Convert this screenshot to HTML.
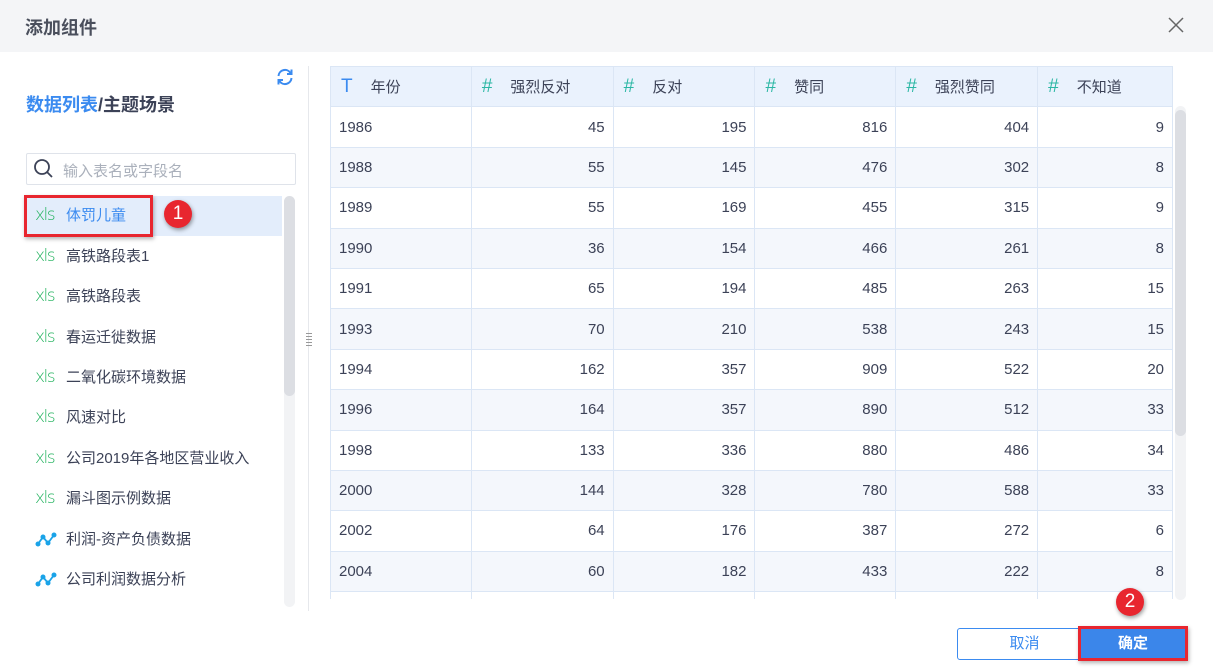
<!DOCTYPE html><html><head><meta charset="utf-8"><style>
*{margin:0;padding:0;box-sizing:border-box}
body{width:1213px;height:671px;background:#fff;font-family:"Liberation Sans","Noto Sans CJK SC",sans-serif;position:relative;overflow:hidden;color:#3c4257}
.a{position:absolute}
.hdr{left:0;top:0;width:1213px;height:52px;background:#f4f5f7}
.li{position:absolute;left:25px;width:257px;height:40px;font-size:15px;line-height:40px;color:#3c4257}
.xls{position:absolute;left:10px;top:-1px;color:#24b35f;font-size:17px;letter-spacing:-1.5px;font-family:"DejaVu Sans",sans-serif;font-weight:200}
.li span.t{position:absolute;left:41px}
table{border-collapse:collapse;position:absolute;left:330px;top:66px;font-size:15px}
td,th{border:1px solid #dbe6f5;height:40.4px;padding:0 8px;font-weight:normal}
th{background:#eaf2fd;text-align:left;color:#3c4257}
td{text-align:right}
td:first-child{text-align:left}
tr:nth-child(odd) td{background:#f4f7fc}
.h{color:#2bb7a4;font-size:19px;margin:0 18px 0 2px}
.badge{position:absolute;width:28px;height:28px;border-radius:50%;background:#e8262f;color:#fff;font-size:19px;text-align:center;line-height:28px;box-shadow:1px 2px 4px rgba(0,0,0,.4)}
</style></head><body>
<div class="a hdr"></div>
<div class="a" style="left:25px;top:14px;font-size:18px;font-weight:bold;color:#4a4f5c">添加组件</div>
<svg class="a" style="left:1167px;top:16px" width="18" height="18"><path d="M2 2L16 16M16 2L2 16" stroke="#666" stroke-width="1.5"/></svg>
<svg class="a" style="left:275px;top:67px" width="20" height="20" viewBox="0 0 20 20"><path d="M3.5 9A6.5 6.5 0 0 1 15.5 6M16.5 11A6.5 6.5 0 0 1 4.5 14" stroke="#3b8bf0" stroke-width="2" fill="none"/><path d="M16.5 2.5V7H12" stroke="#3b8bf0" stroke-width="2" fill="none"/><path d="M3.5 17.5V13H8" stroke="#3b8bf0" stroke-width="2" fill="none"/></svg>
<div class="a" style="left:26px;top:91px;font-size:18px;font-weight:bold"><span style="color:#3b8bf0">数据列表</span><span style="color:#3c4257">/主题场景</span></div>
<div class="a" style="left:26px;top:153px;width:270px;height:32px;border:1px solid #dfe3ea;border-radius:2px"></div>
<svg class="a" style="left:33px;top:158px" width="22" height="22"><circle cx="9" cy="9" r="7" stroke="#3c4257" stroke-width="1.8" fill="none"/><path d="M14 14L19 19" stroke="#3c4257" stroke-width="1.8"/></svg>
<div class="a" style="left:63px;top:160px;font-size:15px;color:#aab0bb">输入表名或字段名</div>
<div class="a" style="left:25px;top:196px;width:257px;height:40px;background:#e3edfb"></div>
<div class="li" style="top:196px"><span class="xls">xls</span><span class="t" style="color:#3b8bf0">体罚儿童</span></div>
<div class="li" style="top:237px"><span class="xls">xls</span><span class="t">高铁路段表1</span></div>
<div class="li" style="top:277px"><span class="xls">xls</span><span class="t">高铁路段表</span></div>
<div class="li" style="top:318px"><span class="xls">xls</span><span class="t">春运迁徙数据</span></div>
<div class="li" style="top:358px"><span class="xls">xls</span><span class="t">二氧化碳环境数据</span></div>
<div class="li" style="top:398px"><span class="xls">xls</span><span class="t">风速对比</span></div>
<div class="li" style="top:439px"><span class="xls">xls</span><span class="t">公司2019年各地区营业收入</span></div>
<div class="li" style="top:479px"><span class="xls">xls</span><span class="t">漏斗图示例数据</span></div>
<div class="li" style="top:520px"><svg class="a" style="left:10px;top:12px" width="22" height="16"><path d="M3 12L8 5L13 11L19 3" stroke="#1aa3e8" stroke-width="1.8" fill="none"/><circle cx="3" cy="12" r="2.5" fill="#1aa3e8"/><circle cx="8" cy="5" r="2.5" fill="#1aa3e8"/><circle cx="13" cy="11" r="2.5" fill="#1aa3e8"/><circle cx="19" cy="3" r="2.5" fill="#1aa3e8"/></svg><span class="t">利润-资产负债数据</span></div>
<div class="li" style="top:560px"><svg class="a" style="left:10px;top:12px" width="22" height="16"><path d="M3 12L8 5L13 11L19 3" stroke="#1aa3e8" stroke-width="1.8" fill="none"/><circle cx="3" cy="12" r="2.5" fill="#1aa3e8"/><circle cx="8" cy="5" r="2.5" fill="#1aa3e8"/><circle cx="13" cy="11" r="2.5" fill="#1aa3e8"/><circle cx="19" cy="3" r="2.5" fill="#1aa3e8"/></svg><span class="t">公司利润数据分析</span></div>
<div class="a" style="left:284px;top:196px;width:11px;height:411px;background:#f2f3f5;border-radius:6px"></div>
<div class="a" style="left:284px;top:196px;width:11px;height:200px;background:#dcdee3;border-radius:6px"></div>
<div class="a" style="left:24px;top:195px;width:129px;height:42px;border:3px solid #e8262f;box-shadow:1px 2px 4px rgba(0,0,0,.3)"></div>
<div class="badge" style="left:164px;top:200px">1</div>
<div class="a" style="left:308px;top:66px;width:1px;height:545px;background:#e6e8ec"></div>
<div class="a" style="left:306px;top:333px;width:6px;height:14px;background:repeating-linear-gradient(#999 0 1px,transparent 1px 3px)"></div>
<div class="a" style="left:330px;top:66px;width:843px;height:533px;overflow:hidden">
<table style="left:0;top:0;width:843px">
<colgroup><col style="width:141px"><col style="width:142px"><col style="width:142px"><col style="width:141px"><col style="width:142px"><col style="width:135px"></colgroup>
<tr><th><span style="color:#3b8bf0;font-size:19px;margin:0 18px 0 2px">T</span>年份</th><th><span class="h">#</span>强烈反对</th><th><span class="h">#</span>反对</th><th><span class="h">#</span>赞同</th><th><span class="h">#</span>强烈赞同</th><th><span class="h">#</span>不知道</th></tr>
<tr><td>1986</td><td>45</td><td>195</td><td>816</td><td>404</td><td>9</td></tr>
<tr><td>1988</td><td>55</td><td>145</td><td>476</td><td>302</td><td>8</td></tr>
<tr><td>1989</td><td>55</td><td>169</td><td>455</td><td>315</td><td>9</td></tr>
<tr><td>1990</td><td>36</td><td>154</td><td>466</td><td>261</td><td>8</td></tr>
<tr><td>1991</td><td>65</td><td>194</td><td>485</td><td>263</td><td>15</td></tr>
<tr><td>1993</td><td>70</td><td>210</td><td>538</td><td>243</td><td>15</td></tr>
<tr><td>1994</td><td>162</td><td>357</td><td>909</td><td>522</td><td>20</td></tr>
<tr><td>1996</td><td>164</td><td>357</td><td>890</td><td>512</td><td>33</td></tr>
<tr><td>1998</td><td>133</td><td>336</td><td>880</td><td>486</td><td>34</td></tr>
<tr><td>2000</td><td>144</td><td>328</td><td>780</td><td>588</td><td>33</td></tr>
<tr><td>2002</td><td>64</td><td>176</td><td>387</td><td>272</td><td>6</td></tr>
<tr><td>2004</td><td>60</td><td>182</td><td>433</td><td>222</td><td>8</td></tr>
<tr><td>2006</td><td>60</td><td>182</td><td>433</td><td>222</td><td>8</td></tr>
</table></div>
<div class="a" style="left:1175px;top:106px;width:11px;height:494px;background:#f2f3f5;border-radius:6px"></div>
<div class="a" style="left:1175px;top:110px;width:11px;height:326px;background:#dcdee3;border-radius:6px"></div>
<div class="a" style="left:957px;top:628px;width:135px;height:32px;border:1px solid #3b8bf0;border-radius:3px;color:#3b8bf0;font-size:15px;text-align:center;line-height:30px">取消</div>
<div class="a" style="left:1078px;top:626px;width:110px;height:35px;border:3px solid #e8262f;background:#3b86ea;color:#fff;font-size:15px;font-weight:bold;text-align:center;line-height:29px;box-shadow:1px 2px 4px rgba(0,0,0,.3)">确定</div>
<div class="badge" style="left:1116px;top:588px">2</div>
</body></html>
